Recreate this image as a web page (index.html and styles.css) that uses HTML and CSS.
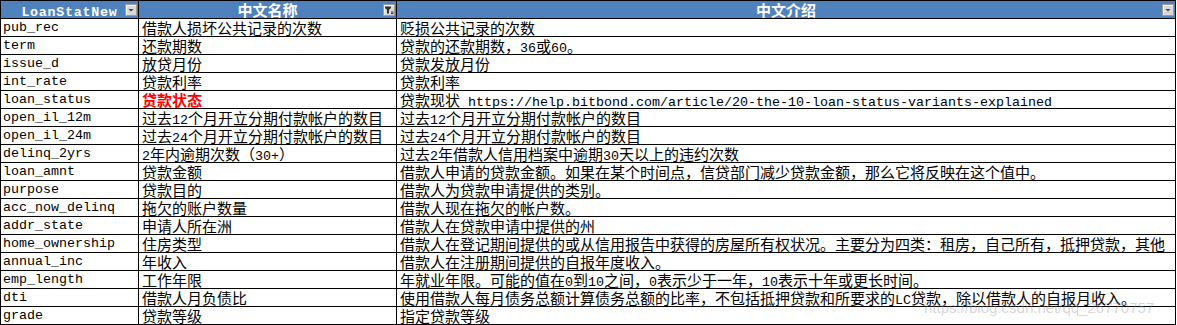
FILE: index.html
```html
<!DOCTYPE html>
<html lang="zh-CN">
<head>
<meta charset="utf-8">
<title>LoanStatNew</title>
<link rel="stylesheet" href="styles.css">
</head>
<body>
<div class="sheet">
  <div class="grid">
    <div class="hd"><span class="hd-latin">LoanStatNew</span><span class="btn"><svg viewBox="0 0 10 10" width="10" height="10"><path d="M2.5 4 L7.5 4 L5 6.5 Z" fill="#444"/></svg></span></div>
    <div class="hd">中文名称<span class="btn"><svg viewBox="0 0 10 10" width="10" height="10"><path d="M1 1.5 H7 V3 L5 4.8 V8.5 H3 V4.8 L1 3 Z" fill="#333"/><rect x="7" y="6.5" width="2.5" height="1" fill="#333"/><rect x="7" y="8" width="2.5" height="1" fill="#333"/></svg></span></div>
    <div class="hd">中文介绍<span class="btn"><svg viewBox="0 0 10 10" width="10" height="10"><path d="M2.5 4 L7.5 4 L5 6.5 Z" fill="#444"/></svg></span></div>

    <div class="c m">pub_rec</div><div class="c">借款人损坏公共记录的次数</div><div class="c">贬损公共记录的次数</div>
    <div class="c m">term</div><div class="c">还款期数</div><div class="c">贷款的还款期数，<span class="m">36</span>或<span class="m">60</span>。</div>
    <div class="c m">issue_d</div><div class="c">放贷月份</div><div class="c">贷款发放月份</div>
    <div class="c m">int_rate</div><div class="c">贷款利率</div><div class="c">贷款利率</div>
    <div class="c m">loan_status</div><div class="c red">贷款状态</div><div class="c">贷款现状<span class="m"> https://help.bitbond.com/article/20-the-10-loan-status-variants-explained</span></div>
    <div class="c m">open_il_12m</div><div class="c">过去<span class="m">12</span>个月开立分期付款帐户的数目</div><div class="c">过去<span class="m">12</span>个月开立分期付款帐户的数目</div>
    <div class="c m">open_il_24m</div><div class="c">过去<span class="m">24</span>个月开立分期付款帐户的数目</div><div class="c">过去<span class="m">24</span>个月开立分期付款帐户的数目</div>
    <div class="c m">delinq_2yrs</div><div class="c"><span class="m">2</span>年内逾期次数（<span class="m">30+</span>）</div><div class="c">过去<span class="m">2</span>年借款人信用档案中逾期<span class="m">30</span>天以上的违约次数</div>
    <div class="c m">loan_amnt</div><div class="c">贷款金额</div><div class="c">借款人申请的贷款金额。如果在某个时间点，信贷部门减少贷款金额，那么它将反映在这个值中。</div>
    <div class="c m">purpose</div><div class="c">贷款目的</div><div class="c">借款人为贷款申请提供的类别。</div>
    <div class="c m">acc_now_delinq</div><div class="c">拖欠的账户数量</div><div class="c">借款人现在拖欠的帐户数。</div>
    <div class="c m">addr_state</div><div class="c">申请人所在洲</div><div class="c">借款人在贷款申请中提供的州</div>
    <div class="c m">home_ownership</div><div class="c">住房类型</div><div class="c">借款人在登记期间提供的或从信用报告中获得的房屋所有权状况。主要分为四类：租房，自己所有，抵押贷款，其他</div>
    <div class="c m">annual_inc</div><div class="c">年收入</div><div class="c">借款人在注册期间提供的自报年度收入。</div>
    <div class="c m">emp_length</div><div class="c">工作年限</div><div class="c">年就业年限。可能的值在<span class="m">0</span>到<span class="m">10</span>之间，<span class="m">0</span>表示少于一年，<span class="m">10</span>表示十年或更长时间。</div>
    <div class="c m">dti</div><div class="c">借款人月负债比</div><div class="c">使用借款人每月债务总额计算债务总额的比率，不包括抵押贷款和所要求的<span class="m">LC</span>贷款，除以借款人的自报月收入。</div>
    <div class="c m">grade</div><div class="c">贷款等级</div><div class="c">指定贷款等级</div>
  </div>
  <div class="watermark">https://blog.csdn.net/qq_26770757</div>
</div>
</body>
</html>
```

FILE: styles.css
```css
html, body {
  margin: 0;
  padding: 0;
  background: #fff;
}

.sheet {
  position: relative;
  width: 1177px;
  height: 325px;
}

.grid {
  display: grid;
  grid-template-columns: 137px 257px 778px;
  grid-auto-rows: 17px;
  gap: 1px;
  padding: 1px;
  background: #000;
  width: max-content;
}

.hd {
  position: relative;
  background: #4f81bd;
  color: #fff;
  font-family: "Noto Sans CJK SC", sans-serif;
  font-weight: 700;
  font-size: 15px;
  line-height: 17px;
  text-align: center;
  white-space: nowrap;
}

.hd-latin {
  font-family: "Liberation Mono", monospace;
  font-size: 13.33px;
  letter-spacing: 0.75px;
  font-weight: 700;
}

.btn {
  position: absolute;
  top: 3px;
  right: 1px;
  width: 10px;
  height: 10px;
  background: #d9d9d9;
  border: 1px solid #9c9c9c;
  box-shadow: inset 1px 1px 0 #f4f4f4;
  display: flex;
  align-items: center;
  justify-content: center;
}

.btn svg {
  display: block;
}

.c {
  background: #fff;
  color: #000;
  font-family: "Noto Sans CJK SC", sans-serif;
  font-size: 15px;
  line-height: 17px;
  padding-left: 3px;
  white-space: nowrap;
}

.m {
  font-family: "Liberation Mono", "Noto Sans CJK SC", monospace;
  font-size: 13.33px;
}

.c.m {
  padding-left: 2px;
  padding-top: 1px;
  line-height: 16px;
}

.red {
  color: #ff0000;
  font-weight: 700;
}

.watermark {
  position: absolute;
  left: 924px;
  top: 299px;
  font-family: "Liberation Sans", sans-serif;
  font-size: 15px;
  color: rgba(150, 150, 150, 0.4);
  white-space: nowrap;
  pointer-events: none;
}
```
